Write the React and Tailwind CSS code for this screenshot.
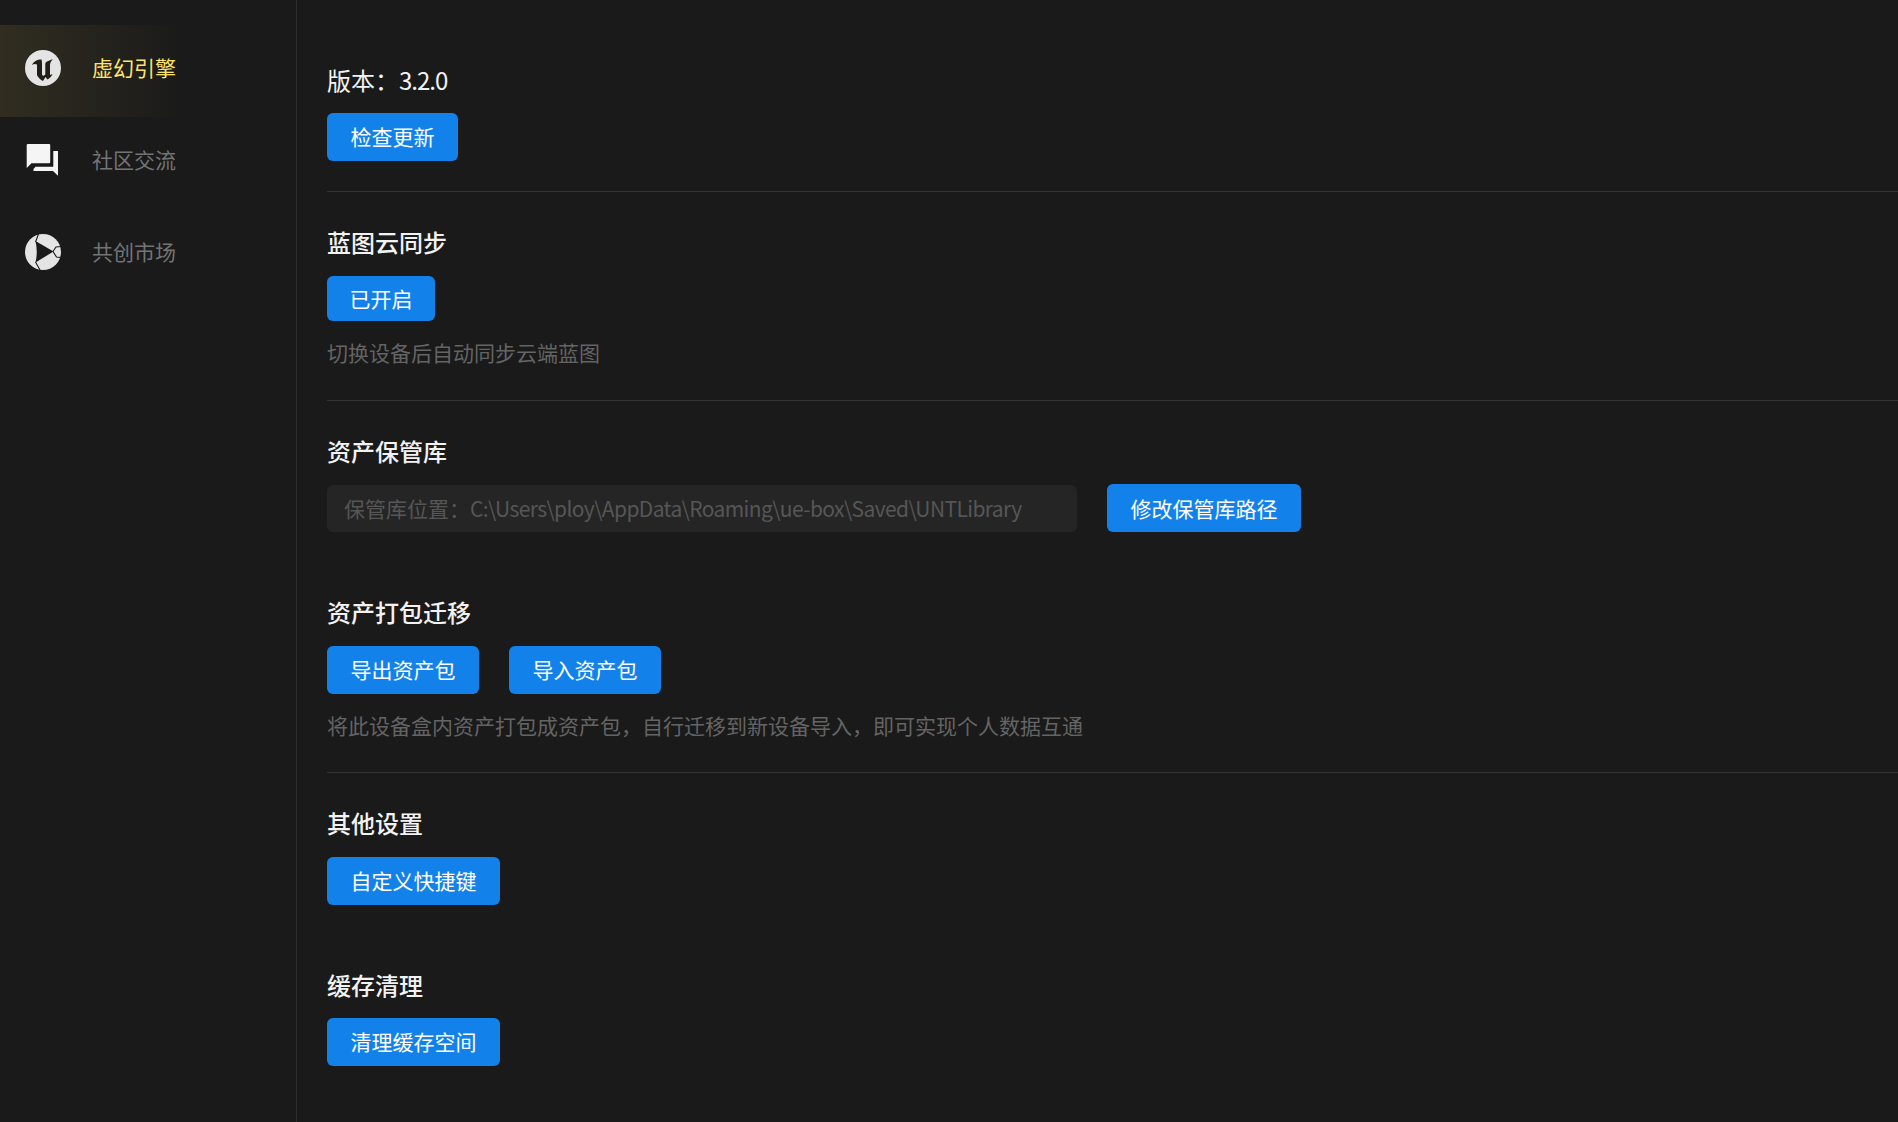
import React from 'react';

const CJK = "font-['Noto_Sans_CJK_SC','Noto_Sans',sans-serif]";

function UeIcon() {
  return (
    <svg width="36" height="36" viewBox="0 0 36 36">
      <circle cx="18" cy="18" r="18" fill="#e4e4e4" />
      <path
        fill="#1f1e18"
        d="M7 15C8.500 11.500 12 9.500 16.500 9.500 16.800 11 17 12 17 14V24C17 25.500 18 26 19 25.500L20.300 24.500V14C20.300 13 21 12 22 11.500L28 9C26 11 25 13 25 15V25L27.500 24C26.500 26.500 24.500 28.500 22.500 29.500L20.500 27 18 31C15.500 30 13 27.500 12 25V14.500C10 13.500 8.500 14 7 15Z"
      />
    </svg>
  );
}

function ForumIcon() {
  return (
    <svg width="36" height="36" viewBox="0 0 36 36" fill="#f5f5f5">
      <path d="M2.500 2H24.500L25.200 2.700V20.500L24.500 21.200H6.500L1.700 26V2.800Z" />
      <path d="M28.300 9H33V33.700L28 29H8.500V27L10.500 24.700H28.300Z" />
    </svg>
  );
}

function MarketIcon() {
  return (
    <svg width="36" height="36" viewBox="0 0 36 36">
      <circle cx="18" cy="18" r="18" fill="#e4e4e4" />
      <path fill="#1a1a1a" d="M10.500 7 28.500 17.500 10.500 28.500Q13 18 10.500 7Z" />
      <path
        stroke="#1a1a1a"
        strokeWidth="1.100"
        fill="none"
        d="M10.500 8 13.500 0M10.500 28 15 36M28 17.500 31 13 36 12.500M28 17.500 31.500 23 36 23.500"
      />
    </svg>
  );
}

function NavItem({ icon, label, active }) {
  return (
    <div
      className={`flex h-[92px] items-center pb-[7px] pl-[25px] ${
        active ? 'bg-gradient-to-r from-[#312d20] to-[#1a1a1a] to-[62%]' : ''
      }`}
    >
      <span className="flex h-9 w-9 shrink-0 items-center justify-center">{icon}</span>
      <span
        className={`ml-[31px] h-7 text-[21px] leading-[26px] ${active ? 'text-[#ffe46a]' : 'text-[#727476]'}`}
      >
        {label}
      </span>
    </div>
  );
}

function Btn({ children, className = 'h-12' }) {
  return (
    <button
      className={`rounded-[6px] bg-[#1282ea] px-[23.500px] text-[21px] text-white ${className}`}
    >
      {children}
    </button>
  );
}

function Heading({ children, className = '' }) {
  return <h2 className={`h-8 text-[24px] leading-[30px] font-medium text-[#f2f2f2] ${className}`}>{children}</h2>;
}

function Hint({ children, className = '' }) {
  return <p className={`h-7 text-[21px] leading-[26px] text-[#646464] ${className}`}>{children}</p>;
}

function Divider({ className = '' }) {
  return <div className={`h-px bg-[#333333] ${className}`} />;
}

export default function App() {
  return (
    <div className={`flex h-[1122px] w-full overflow-hidden bg-[#1a1a1a] ${CJK}`}>
      <aside className="w-[297px] shrink-0 border-r border-[#2e2e2e] pt-[25px]">
        <NavItem icon={<UeIcon />} label="虚幻引擎" active />
        <NavItem icon={<ForumIcon />} label="社区交流" />
        <NavItem icon={<MarketIcon />} label="共创市场" />
      </aside>

      <main className="min-w-0 flex-1 pt-[64px] pl-[30px]">
        <h2 className="h-8 text-[24px] leading-8 font-normal text-[#f2f2f2]">
          版本：<span className="tracking-[-1px]">3.2.0</span>
        </h2>
        <Btn className="mt-[17px] h-12">检查更新</Btn>
        <Divider className="mt-[30px]" />

        <Heading className="mt-[35px]">蓝图云同步</Heading>
        <Btn className="mt-[17px] h-[45px] !px-[22.500px]">已开启</Btn>
        <Hint className="mt-[18px]">切换设备后自动同步云端蓝图</Hint>
        <Divider className="mt-[33px]" />

        <Heading className="mt-[35px]">资产保管库</Heading>
        <div className="mt-[16px] flex items-center gap-[30px]">
          <div className="flex h-[47px] w-[750px] items-center rounded-[6px] bg-[#252525] px-[17px] pt-[2px] text-[21px] whitespace-nowrap text-[#565656]">
            保管库位置：<span className="tracking-[-0.6px]">C:\Users\ploy\AppData\Roaming\ue-box\Saved\UNTLibrary</span>
          </div>
          <Btn className="h-12 pt-[2px]">修改保管库路径</Btn>
        </div>

        <Heading className="mt-[65px]">资产打包迁移</Heading>
        <div className="mt-[17px] flex gap-[30px]">
          <Btn>导出资产包</Btn>
          <Btn>导入资产包</Btn>
        </div>
        <Hint className="mt-[18px]">将此设备盒内资产打包成资产包，自行迁移到新设备导入，即可实现个人数据互通</Hint>
        <Divider className="mt-[32px]" />

        <Heading className="mt-[35px]">其他设置</Heading>
        <Btn className="mt-[17px] h-12">自定义快捷键</Btn>

        <Heading className="mt-[65px]">缓存清理</Heading>
        <Btn className="mt-[16px] h-12">清理缓存空间</Btn>
      </main>
    </div>
  );
}
